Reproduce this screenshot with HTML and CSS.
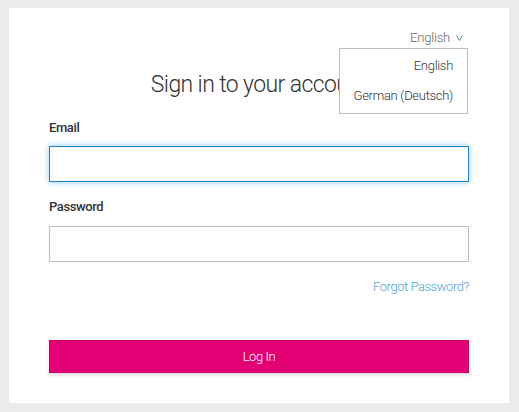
FILE: index.html
```html
<!DOCTYPE html>
<html lang="en">
<head>
<meta charset="utf-8">
<title>Sign in</title>
<link rel="stylesheet" href="styles.css">
</head>
<body>
<div class="card">
  <div class="lang-row">
    <span class="lang-toggle">English</span>
    <svg class="chev" width="7" height="6" viewBox="0 0 7 6"><polyline points="0.5,0.5 3.5,5.5 6.5,0.5" fill="none" stroke="#7a7a7a" stroke-width="1"/></svg>
  </div>
  <ul class="lang-menu">
    <li>English</li>
    <li>German (Deutsch)</li>
  </ul>
  <h1 class="title">Sign in to your account</h1>
  <form class="form">
    <label class="label" for="email">Email</label>
    <input class="input input-focus" id="email" type="text">
    <label class="label label-pw" for="pw">Password</label>
    <input class="input input-pw" id="pw" type="password">
    <div class="forgot-row"><a class="forgot" href="#">Forgot Password?</a></div>
    <button class="btn" type="button">Log In</button>
  </form>
</div>
</body>
</html>
```

FILE: styles.css
```css
* { box-sizing: border-box; }
html, body { margin: 0; padding: 0; }
body {
  background: #ebebeb;
  font-family: Roboto, "Liberation Sans", sans-serif;
  color: #333;
  width: 519px;
  height: 412px;
  overflow: hidden;
}
.card {
  position: relative;
  background: #fff;
  margin: 8px 10px 0 9px;
  height: 395px;
  padding: 22px 40px 0 40px;
}
.lang-row {
  display: flex;
  justify-content: flex-end;
  align-items: center;
  gap: 6px;
  padding-right: 6px;
  font-size: 13px;
  letter-spacing: -0.2px;
  line-height: 16px;
  height: 16px;
  color: #666;
  font-weight: 300;
}
.chev { display: block; margin-top: -1px; }
.lang-menu {
  position: absolute;
  left: 330px;
  top: 40px;
  width: 129px;
  height: 66px;
  margin: 0;
  padding: 9px 14px 0 0;
  list-style: none;
  background: #fff;
  border: 1px solid #bdbdbd;
  text-align: right;
  font-size: 13px;
  letter-spacing: -0.3px;
  line-height: 16px;
  font-weight: 300;
  color: #333;
  z-index: 2;
}
.lang-menu li + li { margin-top: 14px; }
.title {
  margin: 25px 0 0 0;
  font-size: 23px;
  letter-spacing: -0.6px;
  line-height: 28px;
  font-weight: 300;
  text-align: center;
  color: #333;
}
.form {
  display: flex;
  flex-direction: column;
  margin-top: 21px;
}
.label {
  font-size: 13px;
  letter-spacing: -0.4px;
  line-height: 16px;
  font-weight: 500;
  color: #333;
}
.label-pw { margin-top: 17px; }
.input {
  margin-top: 10px;
  width: 420px;
  height: 36px;
  border: 1px solid #bbb;
  background: #fff;
  outline: none;
  padding: 0 8px;
  font: inherit;
}
.input-pw { margin-top: 11px; }
.input-focus {
  border-color: #1b86d4;
  box-shadow: 0 0 6px rgba(27, 134, 212, 0.45);
}
.forgot-row {
  margin-top: 17px;
  text-align: right;
  font-size: 13px;
  letter-spacing: -0.45px;
  line-height: 16px;
}
.forgot {
  color: #5a9fd6;
  text-decoration: none;
  font-weight: 300;
}
.btn {
  margin-top: 45px;
  width: 420px;
  height: 33px;
  background: #e20074;
  border: 1px solid #c8006a;
  color: #fff;
  font-family: Roboto, "Liberation Sans", sans-serif;
  font-size: 13px;
  letter-spacing: -0.4px;
  font-weight: 300;
  padding: 0;
  box-shadow: 0 2px 4px rgba(0, 0, 0, 0.15);
}
```
